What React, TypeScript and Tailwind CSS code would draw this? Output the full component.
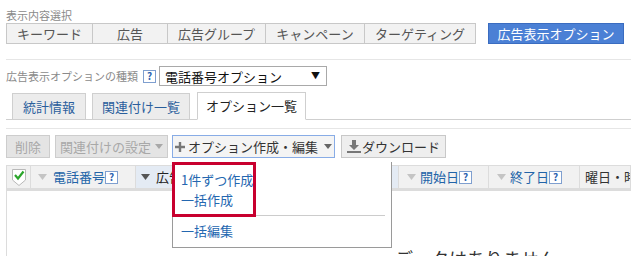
import React from "react";

const F = { fontFamily: '"Noto Sans CJK JP", "Noto Sans", sans-serif' };

function Help({ className = "" }: { className?: string }) {
  return (
    <span
      className={
        "inline-flex items-center justify-center w-[13px] h-[13px] border border-[#7f9fcf] bg-white text-[10px] leading-none text-[#2d62b0] font-bold " +
        className
      }
    >
      ?
    </span>
  );
}

function Arrow({ dark = false }: { dark?: boolean }) {
  return (
    <svg width="9" height="6" viewBox="0 0 9 6" className="shrink-0">
      <path d="M0 0 L9 0 L4.5 6 Z" fill={dark ? "#555" : "#c4c4c4"} />
    </svg>
  );
}

export default function App() {
  const topBtn =
    "h-[21px] flex items-center justify-center border border-[#c8c8c8] bg-[#f2f2f2] text-[13px] text-[#555] -ml-px first:ml-0";
  return (
    <div
      style={F}
      className="relative w-[631px] h-[256px] overflow-hidden bg-white pl-[6px]"
    >
      {/* section label */}
      <div className="pt-[8px] h-[23px] text-[11px] leading-[15px] text-[#8a8a8a]">
        表示内容選択
      </div>
      <div className="flex h-[21px]">
        <div className={topBtn + " w-[87px]"}>キーワード</div>
        <div className={topBtn + " w-[76px]"}>広告</div>
        <div className={topBtn + " w-[99px]"}>広告グループ</div>
        <div className={topBtn + " w-[100px]"}>キャンペーン</div>
        <div className={topBtn + " w-[112px]"}>ターゲティング</div>
        <div className="ml-[12px] w-[136px] h-[21px] flex items-center justify-center bg-[#4b80d5] border border-[#3a6cc0] text-[13px] text-white">
          広告表示オプション
        </div>
      </div>

      <div className="mt-[15px] border-t border-[#e6e6e6]" />

      {/* type select */}
      <div className="mt-[6px] h-[20px] flex items-center">
        <span className="text-[11px] text-[#8a8a8a] leading-none">
          広告表示オプションの種類
        </span>
        <Help className="ml-[5px]" />
        <div className="ml-[3px] w-[168px] h-[20px] border border-[#a9a9a9] flex items-center justify-between pl-[5px] pr-[6px]">
          <span className="text-[13px] text-[#111] leading-none">
            電話番号オプション
          </span>
          <span className="text-[9px] text-[#111]">▼</span>
        </div>
      </div>

      {/* tabs */}
      <div className="mt-[7px] h-[27px] flex items-end border-b border-[#cfcfcf] pl-[6px] gap-[6px]">
        <div className="w-[74px] h-[27px] -mb-px border border-[#cfcfcf] bg-[#ececec] flex items-center justify-center text-[13px] text-[#2a5e9c]">
          統計情報
        </div>
        <div className="w-[98px] h-[27px] -mb-px border border-[#cfcfcf] bg-[#ececec] flex items-center justify-center text-[13px] text-[#2a5e9c]">
          関連付け一覧
        </div>
        <div className="ml-[1px] w-[109px] h-[28px] -mb-px border border-[#cfcfcf] border-b-white bg-white flex items-center justify-center text-[13px] text-[#222]">
          オプション一覧
        </div>
      </div>

      <div className="mt-[8px] border-t border-[#e6e6e6]" />

      {/* toolbar */}
      <div className="mt-[6px] h-[23px] flex items-center">
        <div className="w-[44px] h-[23px] border border-[#cdcdcd] bg-[#e4e4e4] flex items-center justify-center text-[13px] text-[#a8a8a8]">
          削除
        </div>
        <div className="ml-[5px] w-[113px] h-[23px] border border-[#cdcdcd] bg-[#e4e4e4] flex items-center justify-center gap-[4px] text-[13px] text-[#a8a8a8]">
          関連付けの設定
          <svg width="8" height="5" viewBox="0 0 8 5">
            <path d="M0 0 L8 0 L4 5 Z" fill="#a8a8a8" />
          </svg>
        </div>
        <div className="ml-[4px] w-[163px] h-[23px] border border-[#88ace6] bg-[#f4f4f4] flex items-center justify-center gap-[3px] text-[13px] text-[#333]">
          <svg width="10" height="10" viewBox="0 0 10 10">
            <path d="M3.8 0 H6.2 V3.8 H10 V6.2 H6.2 V10 H3.8 V6.2 H0 V3.8 H3.8 Z" fill="#777" />
          </svg>
          オプション作成・編集
          <svg width="8" height="5" viewBox="0 0 8 5" className="ml-[3px]">
            <path d="M0 0 L8 0 L4 5 Z" fill="#666" />
          </svg>
        </div>
        <div className="ml-[6px] w-[105px] h-[23px] border border-[#c8c8c8] bg-[#eeeeee] flex items-center justify-center text-[13px] text-[#333]">
          <svg width="14" height="13" viewBox="0 0 14 13" className="mr-[1px]">
            <path d="M5 0 H9 V5 H12 L7 10 L2 5 H5 Z" fill="#777" />
            <rect x="0" y="11" width="14" height="2" fill="#777" />
          </svg>
          ダウンロード
        </div>
      </div>

      {/* table header */}
      <div className="mt-[7px] h-[26px] flex border border-[#dcdcdc] border-b-[3px] bg-[#f1f1f1] text-[13px]">
        <div className="w-[24px] flex items-center justify-center border-r border-[#dcdcdc]">
          <svg width="14" height="17" viewBox="0 0 14 17">
            <path d="M0.5 0.5 H13.5 V11 L7 16.5 L0.5 11 Z" fill="#fff" stroke="#b8b8b8" />
            <path d="M3 6 L6 9.5 L11.5 2.5" fill="none" stroke="#2aa52a" strokeWidth="2.2" />
          </svg>
        </div>
        <div className="w-[105px] flex items-center pl-[7px] border-r border-[#dcdcdc]">
          <Arrow />
          <span className="ml-[6px] text-[#2264a8]">電話番号</span>
          <Help />
        </div>
        <div className="w-[263px] flex items-center pl-[5px] bg-[#e4ebf4] border-r border-[#dcdcdc]">
          <Arrow dark />
          <span className="ml-[6px] text-[#222]">広告</span>
        </div>
        <div className="w-[90px] flex items-center pl-[8px] border-r border-[#dcdcdc]">
          <Arrow />
          <span className="ml-[4px] text-[#2264a8]">開始日</span>
          <Help />
        </div>
        <div className="w-[91px] flex items-center pl-[8px] border-r border-[#dcdcdc]">
          <Arrow />
          <span className="ml-[4px] text-[#2264a8]">終了日</span>
          <Help />
        </div>
        <div className="flex-1 flex items-center pl-[5px] text-[#333] whitespace-nowrap overflow-hidden">
          曜日・時間帯
        </div>
      </div>

      {/* table body */}
      <div className="h-[80px] border-l border-[#dcdcdc] relative">
        <div className="pt-[56px] pl-[388px] text-[18px] leading-[22px] text-[#333] whitespace-nowrap">
          データはありません
        </div>
      </div>

      {/* dropdown menu */}
      <div className="absolute left-[172px] top-[162px] w-[220px] h-[86px] bg-white border border-[#9a9a9a] border-t-0">
        <div className="absolute left-[-1px] top-0 w-[84px] h-[55px] border-[3px] border-[#c8002f]" />
        <div className="pt-[8px] pl-[8px] text-[13px] leading-[20px] text-[#2467b0]">
          <div>1件ずつ作成</div>
          <div>一括作成</div>
        </div>
        <div className="mt-[5px] mr-[6px] border-t border-[#cccccc]" />
        <div className="pt-[5px] pl-[8px] text-[13px] leading-[20px] text-[#2467b0]">
          一括編集
        </div>
      </div>
    </div>
  );
}
